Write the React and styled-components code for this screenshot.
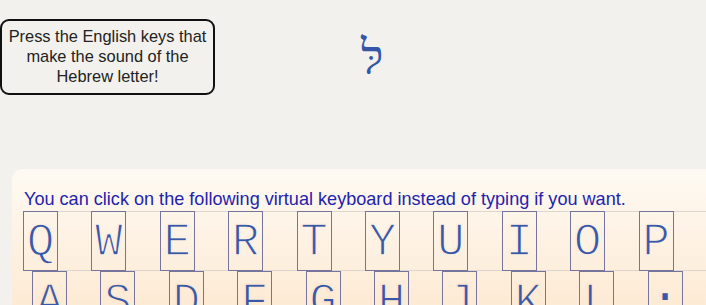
import React from 'react';
import styled, { createGlobalStyle } from 'styled-components';

const GlobalStyle = createGlobalStyle`
  html, body {
    margin: 0;
    padding: 0;
    background: #f2f1ed;
    font-family: "Liberation Sans", Arial, sans-serif;
    overflow: hidden;
  }
`;

const Top = styled.div`
  display: flex;
  align-items: flex-start;
  padding-top: 19px;
`;

const Hint = styled.div`
  width: 215px;
  box-sizing: border-box;
  border: 2px solid #111;
  border-radius: 9px;
  padding: 5px 2px 7px;
  text-align: center;
  font-size: 16.4px;
  line-height: 20px;
  color: #222;
`;

const Letter = styled.div`
  margin: 11px 0 0 146px;
  font-family: "Liberation Serif", "DejaVu Serif", serif;
  font-size: 48px;
  line-height: 56px;
  color: #3556a8;
`;

const Panel = styled.section`
  margin: 74px 0 0 12px;
  padding: 20px 0 0 11px;
  height: 200px;
  border-radius: 10px 0 0 0;
  background: linear-gradient(180deg, #fefaf3 0%, #fdecd8 55%, #fde0c3 100%);
`;

const Caption = styled.p`
  margin: 0 0 2px 1px;
  font-size: 18.1px;
  line-height: 20px;
  color: #2323ad;
`;

const Row = styled.div`
  display: flex;
  gap: 33.4px;
  margin-left: ${p => p.$shift}px;
  border-top: ${p => (p.$top ? '1px solid #ddd6cf' : '0')};
  border-bottom: 1px solid #ddd6cf;
`;

const Key = styled.div`
  flex: none;
  width: 35px;
  height: 60px;
  box-sizing: border-box;
  margin: ${p => (p.$top ? '-1px' : '0')} 0 -1px;
  border: 1px solid #74749c;
  font-family: "Liberation Mono", "Courier New", monospace;
  font-size: 46px;
  line-height: 62px;
  color: #3a58a8;
  -webkit-text-stroke: 1.4px ${p => p.$bg};
  text-align: center;
  overflow: visible;
  white-space: nowrap;
  cursor: pointer;
`;

const Dot = styled.span`
  position: relative;
  top: -5px;
  -webkit-text-stroke: 0;
`;

const rows = [
  { keys: ['Q', 'W', 'E', 'R', 'T', 'Y', 'U', 'I', 'O', 'P'], shift: 0, top: true, bg: '#fdf1e3' },
  { keys: ['A', 'S', 'D', 'F', 'G', 'H', 'J', 'K', 'L', '·'], shift: 9, top: false, bg: '#fde8d1' },
];

export default function App() {
  return (
    <>
      <GlobalStyle />
      <Top>
        <Hint>
          Press the English keys that
          <br />
          make the sound of the
          <br />
          Hebrew letter!
        </Hint>
        <Letter>לּ</Letter>
      </Top>
      <Panel>
        <Caption>You can click on the following virtual keyboard instead of typing if you want.</Caption>
        {rows.map((r, i) => (
          <Row key={i} $shift={r.shift} $top={r.top}>
            {r.keys.map(k => (
              <Key key={k} $top={r.top} $bg={r.bg} role="button">
                {k === '·' ? <Dot>{k}</Dot> : k}
              </Key>
            ))}
          </Row>
        ))}
      </Panel>
    </>
  );
}
